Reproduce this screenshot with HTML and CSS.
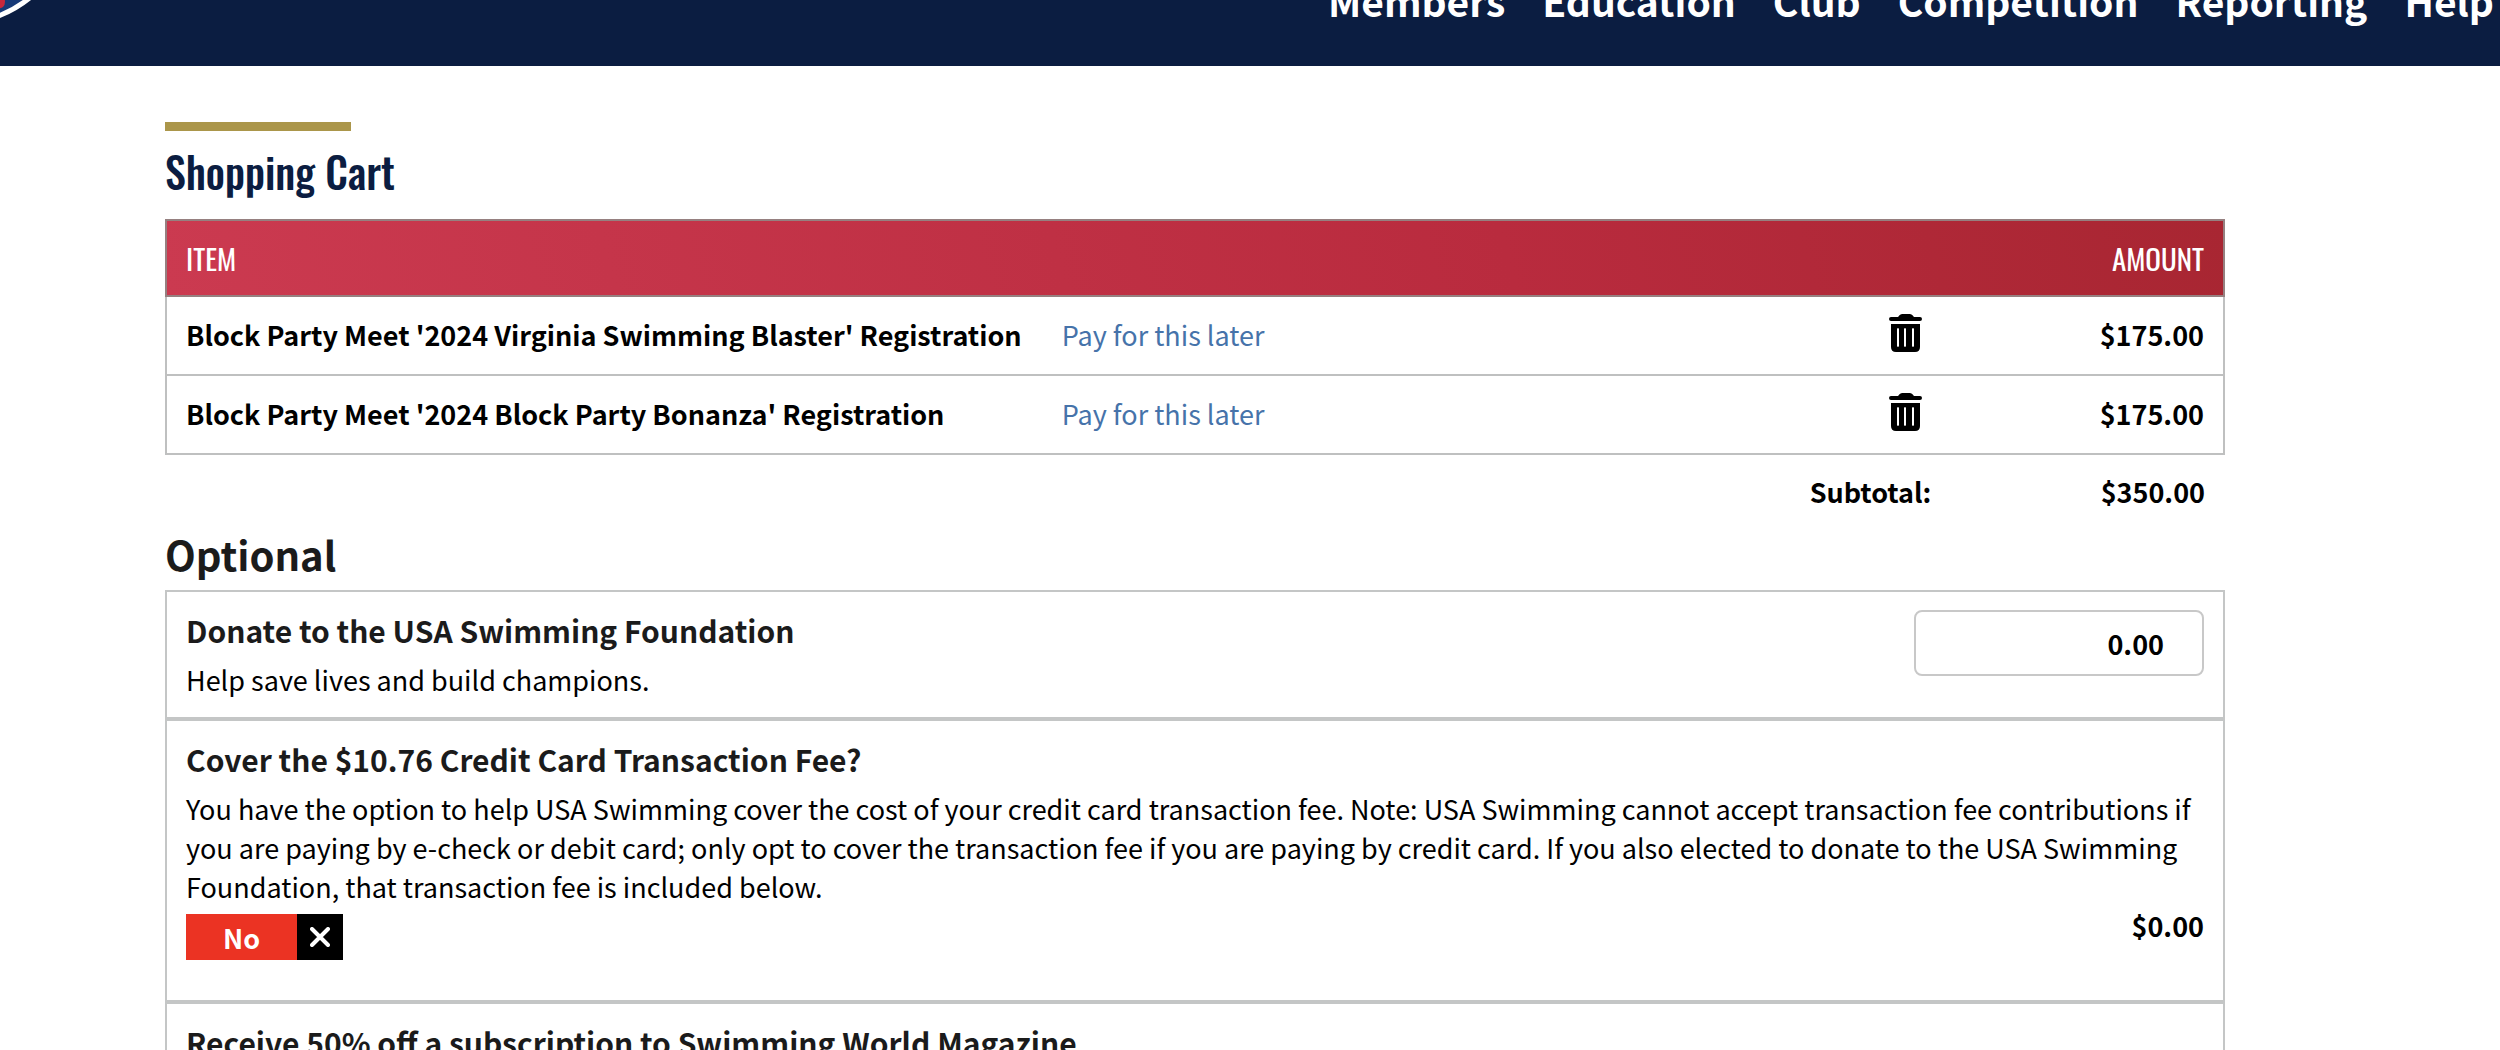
FILE: index.html
```
<!DOCTYPE html>
<html lang="en">
<head>
	<meta charset="utf-8">
	<title>Shopping Cart</title>
	<meta name="viewport" content="width=device-width, initial-scale=1">
	<link rel="stylesheet" href="styles.css">
</head>
<body>
	<header class="site-header">
		<a class="logo" href="#" aria-label="Home">
			<svg width="80" height="132" viewBox="0 -66 80 132">
				<circle cx="-44" cy="-93" r="117" fill="#173a78" stroke="#fff" stroke-width="5"/>
				<path d="M-10 -20L3 -6Q7 3 3 7Q0 9 -6 9Z" fill="#c8283c"/>
			</svg>
		</a>
		<nav class="main-nav">
			<a href="#">Members</a>
			<a href="#">Education</a>
			<a href="#">Club</a>
			<a href="#">Competition</a>
			<a href="#">Reporting</a>
			<a href="#">Help</a>
		</nav>
	</header>

	<main class="content">
		<h1 class="page-title">Shopping Cart</h1>

		<table class="cart">
			<colgroup>
				<col class="col-item">
				<col class="col-later">
				<col class="col-amount">
			</colgroup>
			<thead>
				<tr>
					<th colspan="2">ITEM</th>
					<th class="amount">AMOUNT</th>
				</tr>
			</thead>
			<tbody>
				<tr>
					<td class="name">Block Party Meet '2024 Virginia Swimming Blaster' Registration</td>
					<td>
						<div class="actions">
							<a href="#">Pay for this later</a>
							<button type="button" class="remove" aria-label="Remove item">
								<svg width="34" height="38" viewBox="0 0 34 38">
									<path d="M2 3H9Q11 0 13 0H21Q23 0 25 3H31Q33 3 33 5T31 7H2Q0 7 0 5T2 3Z"/>
									<path fill-rule="evenodd" d="M2 10H31V33Q31 38 26 38H7Q2 38 2 33ZM8 15V32Q9 34 10 32V15Q9 13 8 15ZM15 15V32Q16 34 17 32V15Q16 13 15 15ZM23 15V32Q24 34 25 32V15Q24 13 23 15Z"/>
								</svg>
							</button>
						</div>
					</td>
					<td class="amount">$175.00</td>
				</tr>
				<tr>
					<td class="name">Block Party Meet '2024 Block Party Bonanza' Registration</td>
					<td>
						<div class="actions">
							<a href="#">Pay for this later</a>
							<button type="button" class="remove" aria-label="Remove item">
								<svg width="34" height="38" viewBox="0 0 34 38">
									<path d="M2 3H9Q11 0 13 0H21Q23 0 25 3H31Q33 3 33 5T31 7H2Q0 7 0 5T2 3Z"/>
									<path fill-rule="evenodd" d="M2 10H31V33Q31 38 26 38H7Q2 38 2 33ZM8 15V32Q9 34 10 32V15Q9 13 8 15ZM15 15V32Q16 34 17 32V15Q16 13 15 15ZM23 15V32Q24 34 25 32V15Q24 13 23 15Z"/>
								</svg>
							</button>
						</div>
					</td>
					<td class="amount">$175.00</td>
				</tr>
			</tbody>
			<tfoot>
				<tr>
					<td colspan="2" class="amount">Subtotal:</td>
					<td class="amount">$350.00</td>
				</tr>
			</tfoot>
		</table>

		<h2 class="section-title">Optional</h2>

		<section class="option donate">
			<div>
				<h3><label for="donation">Donate to the USA Swimming Foundation</label></h3>
				<p>Help save lives and build champions.</p>
			</div>
			<input type="text" id="donation" class="donation" value="0.00">
		</section>

		<section class="option">
			<h3 id="fee-title">Cover the $10.76 Credit Card Transaction Fee?</h3>
			<p>You have the option to help USA Swimming cover the cost of your credit card transaction fee. Note: USA Swimming cannot accept transaction fee contributions if you are paying by e-check or debit card; only opt to cover the transaction fee if you are paying by credit card. If you also elected to donate to the USA Swimming Foundation, that transaction fee is included below.</p>
			<div class="fee">
				<button type="button" class="toggle" role="switch" aria-checked="false" aria-describedby="fee-title">
					<span class="toggle-text">No</span>
					<span class="toggle-mark">
						<svg width="20" height="20" viewBox="0 0 20 20">
							<path d="M2 2L18 18M18 2L2 18" stroke="#fff" stroke-width="4" stroke-linecap="round"/>
						</svg>
					</span>
				</button>
				<span class="fee-amount">$0.00</span>
			</div>
		</section>

		<section class="option">
			<h3>Receive 50% off a subscription to Swimming World Magazine</h3>
		</section>
	</main>
</body>
</html>
```
FILE: styles.css
```
* {
	box-sizing: border-box;
}
body {
	margin: 0;
	overflow: hidden;
	background: #fff;
	color: #000;
	font-family: "Source Sans Pro", "Noto Sans CJK SC", sans-serif;
	font-size: 27px;
	line-height: 39px;
}
a {
	color: #4673aa;
	text-decoration: none;
}
h1, h2, h3, p {
	margin: 0;
}

/* header, scrolled half way off the top */
.site-header {
	display: flex;
	align-items: center;
	justify-content: space-between;
	height: 132px;
	margin-top: -66px;
	padding-right: 6px;
	background: #0b1d41;
}
.logo svg {
	display: block;
}
.main-nav {
	display: flex;
	gap: 37px;
	font-size: 39px;
	font-weight: bold;
}
.main-nav a {
	color: #fff;
}

.content {
	padding: 56px 11% 0 165px;
}
.page-title {
	margin-bottom: 12px;
	color: #0b1d41;
	font-family: Oswald, "Liberation Sans Narrow", sans-serif;
	font-size: 42px;
	font-weight: 500;
	line-height: 72px;
}
.page-title::before {
	content: "";
	display: block;
	width: 186px;
	height: 9px;
	margin-bottom: 4px;
	background: #ab964a;
}

/* cart */
.cart {
	width: 100%;
	table-layout: fixed;
	border-collapse: collapse;
	font-weight: bold;
}
.col-item {
	width: 42.6%;
}
.col-amount {
	width: 13.3%;
}
.cart th,
.cart td {
	padding: 0 19px 2px;
	text-align: left;
}
.cart thead {
	background: linear-gradient(75deg, #cb3a50, #b92b3e 65%, #a82632);
}
.cart thead tr {
	height: 76px;
	border: 2px solid #968080;
}
.cart th {
	color: #fff;
	font-family: Oswald, "Liberation Sans Narrow", sans-serif;
	font-size: 29px;
	font-weight: normal;
}
.cart tbody tr {
	height: 79px;
	border: 2px solid #bfc0c0;
}
.cart tfoot tr {
	height: 76px;
}
.cart .amount {
	text-align: right;
}
.actions {
	display: flex;
	align-items: center;
	justify-content: space-between;
	font-weight: normal;
}
.remove {
	margin: 0 8px 4px 0;
	padding: 0;
	border: 0;
	background: none;
	cursor: pointer;
}
.remove svg {
	display: block;
}

/* optional items */
.section-title {
	padding-bottom: 12px;
	color: #1b1b1b;
	font-size: 40px;
	line-height: 48px;
}
.option {
	padding: 18px 19px 40px;
	border: 2px solid #c4c6c6;
}
.option h3 {
	margin-bottom: 10px;
	color: #1b1b1b;
	font-size: 30px;
	line-height: 40px;
}
.donate {
	display: flex;
	align-items: flex-start;
	justify-content: space-between;
	padding-bottom: 18px;
}
.donation {
	width: 290px;
	height: 66px;
	padding: 0 38px;
	border: 2px solid #c8c8c8;
	border-radius: 8px;
	color: #000;
	font: bold 27px "Source Sans Pro", "Noto Sans CJK SC", sans-serif;
	text-align: right;
}
.fee {
	display: flex;
	align-items: flex-start;
	justify-content: space-between;
	padding-top: 8px;
}
.toggle {
	display: flex;
	height: 46px;
	padding: 0;
	border: 0;
	color: #fff;
	font: bold 27px "Source Sans Pro", "Noto Sans CJK SC", sans-serif;
	cursor: pointer;
}
.toggle span {
	display: flex;
	align-items: center;
	justify-content: center;
	height: 46px;
}
.toggle-text {
	width: 111px;
	background: #eb3323;
}
.toggle-mark {
	width: 46px;
	background: #000;
}
.fee-amount {
	font-weight: bold;
	line-height: 24px;
}
```
